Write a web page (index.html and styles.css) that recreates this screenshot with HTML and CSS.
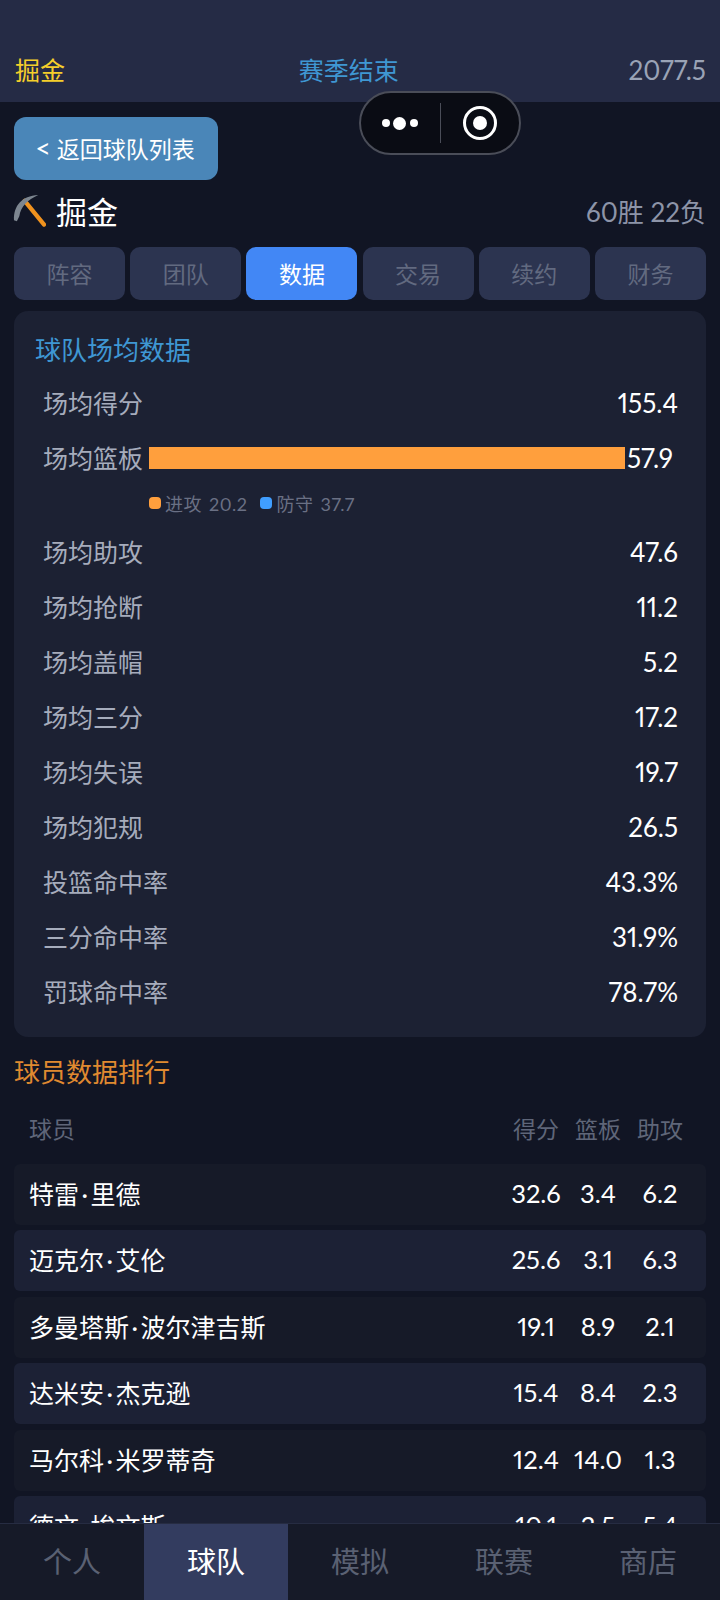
FILE: index.html
```html
<!DOCTYPE html>
<html lang="zh">
<head>
<meta charset="utf-8">
<title>掘金</title>
<link rel="stylesheet" href="styles.css">
</head>
<body>
<div class="app">
  <header class="topbar">
    <span class="tb-team">掘金</span>
    <span class="tb-status">赛季结束</span>
    <span class="tb-money">2077.5</span>
  </header>

  <div class="capsule">
    <div class="cap-dots"><i class="d-s"></i><i class="d-l"></i><i class="d-s"></i></div>
    <div class="cap-line"></div>
    <div class="cap-rec"><i></i></div>
  </div>

  <main class="content">
    <button class="back"><span class="chev">&lt;</span> 返回球队列表</button>

    <div class="team-head">
      <div class="team-name">
        <svg class="pick" viewBox="0 0 34 34" aria-hidden="true">
          <path d="M32 31.5 L12 7" stroke="#f0921e" stroke-width="4.4" stroke-linecap="round" fill="none"/>
          <path d="M1 27 C0.5 12 9 2 26 1 C15 6 8 13 6.5 23 L4 28 Z" fill="#7d8690"/>
        </svg>
        <span>掘金</span>
      </div>
      <span class="record">60胜 22负</span>
    </div>

    <nav class="tabs">
      <div class="tab">阵容</div>
      <div class="tab">团队</div>
      <div class="tab on">数据</div>
      <div class="tab">交易</div>
      <div class="tab">续约</div>
      <div class="tab">财务</div>
    </nav>

    <section class="card">
      <h2 class="card-title">球队场均数据</h2>
      <div class="stat"><span class="lbl">场均得分</span><span class="val">155.4</span></div>
      <div class="stat">
        <span class="lbl">场均篮板</span>
        <div class="bar"></div>
        <span class="val val-bar">57.9</span>
      </div>
      <div class="legend">
        <i class="dot dot-o"></i><span class="lg-a">进攻 20.2</span>
        <i class="dot dot-b"></i><span>防守 37.7</span>
      </div>
      <div class="stat"><span class="lbl">场均助攻</span><span class="val">47.6</span></div>
      <div class="stat"><span class="lbl">场均抢断</span><span class="val">11.2</span></div>
      <div class="stat"><span class="lbl">场均盖帽</span><span class="val">5.2</span></div>
      <div class="stat"><span class="lbl">场均三分</span><span class="val">17.2</span></div>
      <div class="stat"><span class="lbl">场均失误</span><span class="val">19.7</span></div>
      <div class="stat"><span class="lbl">场均犯规</span><span class="val">26.5</span></div>
      <div class="stat"><span class="lbl">投篮命中率</span><span class="val">43.3%</span></div>
      <div class="stat"><span class="lbl">三分命中率</span><span class="val">31.9%</span></div>
      <div class="stat"><span class="lbl">罚球命中率</span><span class="val">78.7%</span></div>
    </section>

    <h2 class="rank-title">球员数据排行</h2>

    <div class="rank-head">
      <span class="p-name">球员</span><span class="p-num">得分</span><span class="p-num">篮板</span><span class="p-num">助攻</span>
    </div>
    <div class="rank-list">
      <div class="p-row"><span class="p-name">特雷<b class="mid">·</b>里德</span><span class="p-num">32.6</span><span class="p-num">3.4</span><span class="p-num">6.2</span></div>
      <div class="p-row alt"><span class="p-name">迈克尔<b class="mid">·</b>艾伦</span><span class="p-num">25.6</span><span class="p-num">3.1</span><span class="p-num">6.3</span></div>
      <div class="p-row"><span class="p-name">多曼塔斯<b class="mid">·</b>波尔津吉斯</span><span class="p-num">19.1</span><span class="p-num">8.9</span><span class="p-num">2.1</span></div>
      <div class="p-row alt"><span class="p-name">达米安<b class="mid">·</b>杰克逊</span><span class="p-num">15.4</span><span class="p-num">8.4</span><span class="p-num">2.3</span></div>
      <div class="p-row"><span class="p-name">马尔科<b class="mid">·</b>米罗蒂奇</span><span class="p-num">12.4</span><span class="p-num">14.0</span><span class="p-num">1.3</span></div>
      <div class="p-row alt"><span class="p-name">德文<b class="mid">·</b>埃文斯</span><span class="p-num">10.1</span><span class="p-num">2.5</span><span class="p-num">5.4</span></div>
    </div>
  </main>

  <footer class="bottom">
    <div class="nav">个人</div>
    <div class="nav on">球队</div>
    <div class="nav">模拟</div>
    <div class="nav">联赛</div>
    <div class="nav">商店</div>
  </footer>
</div>
</body>
</html>
```
FILE: styles.css
```css
* { box-sizing: border-box; }
html, body { margin: 0; padding: 0; background: #111524; }
body {
  font-family: "Lato", "Noto Sans CJK SC", sans-serif;
  font-weight: 400;
  font-variant-numeric: proportional-nums;
  color: #fff;
}
.app { position: relative; width: 720px; height: 1600px; overflow: hidden; background: #111524; }

.topbar {
  height: 102px;
  padding: 37px 14px 0 15px;
  background: #252b45;
  display: flex;
  justify-content: space-between;
  align-items: center;
  font-size: 25px;
  line-height: 36px;
}
.tb-team { color: #f5cf2b; }
.tb-status { color: #3f97d3; margin-left: 4px; }
.tb-money { color: #9aa3b6; font-size: 26px; }

.capsule {
  position: absolute;
  left: 359px;
  top: 91px;
  width: 162px;
  height: 64px;
  border: 2px solid #4a4d58;
  border-radius: 32px;
  background: #0a0c14;
  display: flex;
  align-items: center;
}
.cap-dots { width: 79px; padding-right: 2px; display: flex; justify-content: center; align-items: center; gap: 3.5px; }
.cap-dots i { display: block; background: #fff; border-radius: 50%; }
.d-s { width: 8px; height: 8px; }
.d-l { width: 13px; height: 13px; }
.cap-line { width: 1px; height: 40px; background: #4a4d58; }
.cap-rec { flex: 1; height: 34px; display: flex; justify-content: center; align-items: center; }
.cap-rec i {
  display: flex;
  width: 34px;
  height: 34px;
  border: 3px solid #fff;
  border-radius: 50%;
}
.cap-rec i::after {
  content: "";
  width: 14px;
  height: 14px;
  margin: auto;
  border-radius: 50%;
  background: #fff;
}

.content { padding: 15px 14px 0; }

.back {
  display: block;
  width: 204px;
  height: 63px;
  padding: 0 2px 2px 0;
  border: 0;
  border-radius: 12px;
  background: #4a86b8;
  color: #fff;
  font: inherit;
  font-size: 23px;
}
.chev { font-size: 27px; line-height: 23px; }

.team-head {
  height: 67px;
  padding-bottom: 6px;
  display: flex;
  align-items: center;
  justify-content: space-between;
}
.team-name { display: flex; align-items: center; font-size: 31px; }
.pick { width: 33px; height: 33px; margin: 0 10px 0 -1px; }
.record { font-size: 26px; color: #8d94a8; }

.tabs {
  display: grid;
  grid-template-columns: repeat(6, 1fr);
  gap: 5.3px;
}
.tab {
  height: 53px;
  padding-bottom: 2px;
  border-radius: 10px;
  background: #2c3450;
  color: #626a80;
  font-size: 23px;
  display: flex;
  align-items: center;
  justify-content: center;
}
.tab.on { background: #4287f5; color: #fff; }

.card {
  margin-top: 11px;
  height: 726px;
  padding: 19px 28px 0 21px;
  border-radius: 14px;
  background: #1c2133;
}
.card-title {
  margin: 0 0 4px;
  font-size: 26px;
  line-height: 40px;
  font-weight: 400;
  color: #3f97d3;
}
.stat {
  height: 55px;
  padding-left: 8px;
  display: flex;
  align-items: center;
  justify-content: space-between;
  font-size: 26px;
}
.lbl { font-size: 25px; color: #a6acbc; white-space: nowrap; }
.val { color: #fff; margin-top: 3px; }
.bar { flex: 1; height: 22px; margin: 2px 2px 0 6px; background: #ff9f3d; }
.val-bar { width: 51px; }

.legend {
  height: 39px;
  padding: 0 0 1px 114px;
  display: flex;
  align-items: center;
  font-size: 18px;
  color: #6a7084;
  word-spacing: 2px;
  letter-spacing: 0.5px;
}
.dot { width: 12px; height: 12px; margin-right: 4px; border-radius: 4px; }
.dot-o { background: #ff9f3d; }
.dot-b { background: #409eff; }
.lg-a { margin-right: 13px; }

.rank-title {
  margin: 15px 0 0;
  font-size: 26px;
  line-height: 40px;
  font-weight: 400;
  color: #e08a30;
}

.rank-head, .p-row {
  display: grid;
  grid-template-columns: 1fr 62px 62px 62px;
  align-items: center;
  padding: 0 15px;
}
.rank-head {
  height: 72px;
  font-size: 23px;
  color: #5f6679;
}
.p-num { text-align: center; }
.rank-list { display: flex; flex-direction: column; gap: 5.4px; }
.p-row {
  height: 61px;
  padding-bottom: 3px;
  border-radius: 6px;
  background: #161a28;
  font-size: 25.5px;
}
.p-row .p-name { font-size: 25px; }
.p-row.alt { background: #1c2135; }
.mid { font-weight: 400; padding: 0 2.5px; }

.bottom {
  position: absolute;
  left: 0;
  right: 0;
  bottom: 0;
  height: 77px;
  display: grid;
  grid-template-columns: repeat(5, 1fr);
  background: #161a28;
  border-top: 1px solid #262c42;
}
.nav {
  display: flex;
  align-items: center;
  justify-content: center;
  padding-bottom: 5px;
  font-size: 29px;
  color: #5a6173;
}
.nav.on { background: #333c5f; color: #fff; }
```
